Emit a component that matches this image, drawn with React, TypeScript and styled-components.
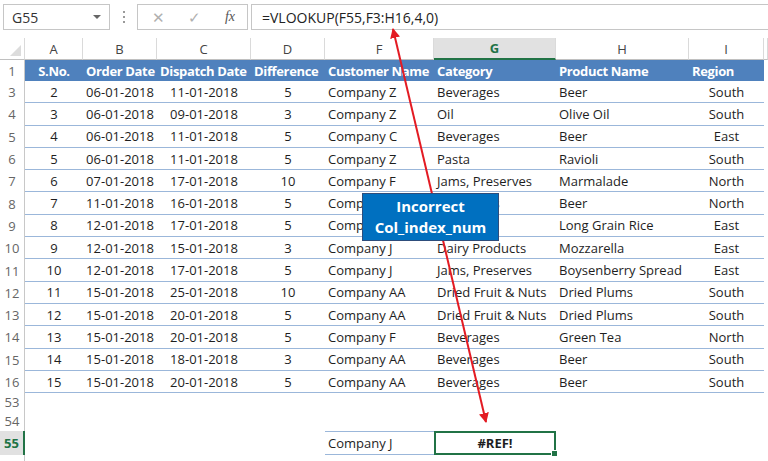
import React from 'react';
import styled, { createGlobalStyle } from 'styled-components';

const GlobalStyle = createGlobalStyle`
  html, body {
    margin: 0;
    padding: 0;
    background: #ffffff;
  }
  body {
    font-family: 'Open Sans', 'Liberation Sans', sans-serif;
  }
`;

const COLS = '25px 58px 74px 94px 74px 109px 122px 133px 75px 1fr';
const GREEN = '#217346';
const TABLE_LINE = '#9bb7da';

const Window = styled.div`
  position: relative;
  width: 768px;
  height: 461px;
  overflow: hidden;
  background: #fff;
`;

const Toolbar = styled.div`
  height: 38px;
  display: flex;
  align-items: flex-start;
  padding-top: 4px;
  box-sizing: border-box;
`;

const NameBox = styled.div`
  width: 107px;
  height: 26px;
  margin-left: 3px;
  box-sizing: border-box;
  border: 1px solid #c6c6c6;
  display: flex;
  align-items: center;
  justify-content: space-between;
  padding: 0 8px;
  font-size: 14px;
  color: #333;
`;

const Caret = styled.span`
  width: 0;
  height: 0;
  border-left: 4px solid transparent;
  border-right: 4px solid transparent;
  border-top: 4px solid #666;
`;

const Dots = styled.div`
  width: 27px;
  display: flex;
  flex-direction: column;
  align-items: center;
  justify-content: center;
  gap: 3px;
  height: 26px;

  span {
    width: 2px;
    height: 2px;
    background: #9a9a9a;
  }
`;

const FuncBox = styled.div`
  width: 111px;
  height: 26px;
  box-sizing: border-box;
  border: 1px solid #c6c6c6;
  display: flex;
  align-items: center;
  justify-content: space-between;
  padding: 0 12px 0 14px;
  color: #b0b0b0;
  font-size: 15px;
`;

const Fx = styled.span`
  font-family: 'Liberation Serif', serif;
  font-style: italic;
  color: #555;
  font-size: 14px;
`;

const FormulaBar = styled.div`
  flex: 1;
  height: 26px;
  margin-left: 3px;
  box-sizing: border-box;
  border: 1px solid #c6c6c6;
  border-right: none;
  display: flex;
  align-items: center;
  padding-left: 10px;
  font-size: 14px;
  color: #222;
`;

const Row = styled.div<{ $h: number }>`
  display: grid;
  grid-template-columns: ${COLS};
  height: ${p => p.$h}px;
`;

const ColHead = styled.div<{ $active?: boolean }>`
  display: flex;
  align-items: center;
  justify-content: center;
  font-size: 13px;
  color: ${p => (p.$active ? GREEN : '#444')};
  font-weight: ${p => (p.$active ? 700 : 400)};
  background: ${p => (p.$active ? '#e1e1e1' : '#fff')};
  border-right: 1px solid #dadada;
  border-bottom: ${p => (p.$active ? `2px solid ${GREEN}` : '1px solid #c0c0c0')};
  box-sizing: border-box;
`;

const Corner = styled.div`
  position: relative;
  border-right: 1px solid #dadada;
  border-bottom: 1px solid #c0c0c0;
  box-sizing: border-box;

  &::after {
    content: '';
    position: absolute;
    right: 3px;
    bottom: 3px;
    border-left: 11px solid transparent;
    border-bottom: 11px solid #dcdcdc;
  }
`;

const RowHead = styled.div<{ $active?: boolean }>`
  display: flex;
  align-items: center;
  justify-content: center;
  font-size: 13px;
  color: ${p => (p.$active ? GREEN : '#666')};
  font-weight: ${p => (p.$active ? 700 : 400)};
  background: ${p => (p.$active ? '#e1e1e1' : '#fff')};
  border-right: ${p => (p.$active ? `2px solid ${GREEN}` : '1px solid #c8c8c8')};
  box-sizing: border-box;
`;

const Cell = styled.div<{ $align?: 'left' | 'center'; $line?: boolean; $head?: boolean }>`
  display: flex;
  align-items: center;
  justify-content: ${p => (p.$align === 'center' ? 'center' : 'flex-start')};
  padding-left: ${p => (p.$align === 'center' ? 0 : 3)}px;
  font-size: 13px;
  white-space: nowrap;
  color: ${p => (p.$head ? '#fff' : '#1e1e1e')};
  font-weight: ${p => (p.$head ? 700 : 400)};
  letter-spacing: ${p => (p.$head ? '-0.35px' : '0')};
  background: ${p => (p.$head ? '#4f81bd' : 'transparent')};
  border-bottom: ${p => (p.$line ? `1px solid ${TABLE_LINE}` : 'none')};
  box-sizing: border-box;
`;

const Spacer = styled.div``;

const ResultCell = styled.div`
  display: flex;
  align-items: center;
  justify-content: center;
  font-size: 13px;
  font-weight: 700;
  color: #1e1e1e;
  border: 2px solid ${GREEN};
  box-sizing: border-box;
  position: relative;

  &::after {
    content: '';
    position: absolute;
    right: -4px;
    bottom: -4px;
    width: 5px;
    height: 5px;
    background: ${GREEN};
    border: 1px solid #fff;
  }
`;

const LookupCell = styled.div`
  display: flex;
  align-items: center;
  padding-left: 3px;
  font-size: 13px;
  color: #1e1e1e;
  border-top: 1px solid ${TABLE_LINE};
  border-bottom: 1px solid ${TABLE_LINE};
  box-sizing: border-box;
`;

const Callout = styled.div`
  position: absolute;
  left: 362px;
  top: 193px;
  width: 137px;
  height: 48px;
  box-sizing: border-box;
  background: #0070c0;
  border: 1px solid #2e4d7b;
  color: #fff;
  font-weight: 700;
  font-size: 15px;
  line-height: 21px;
  display: flex;
  flex-direction: column;
  align-items: center;
  justify-content: center;
  z-index: 2;
`;

const ArrowLayer = styled.svg`
  position: absolute;
  left: 0;
  top: 0;
  width: 768px;
  height: 461px;
  pointer-events: none;
  z-index: 1;
`;

type DataRow = [number, number, string, string, number, string, string, string, string];

const rows: DataRow[] = [
  [3, 2, '06-01-2018', '11-01-2018', 5, 'Company Z', 'Beverages', 'Beer', 'South'],
  [4, 3, '06-01-2018', '09-01-2018', 3, 'Company Z', 'Oil', 'Olive Oil', 'South'],
  [5, 4, '06-01-2018', '11-01-2018', 5, 'Company C', 'Beverages', 'Beer', 'East'],
  [6, 5, '06-01-2018', '11-01-2018', 5, 'Company Z', 'Pasta', 'Ravioli', 'South'],
  [7, 6, '07-01-2018', '17-01-2018', 10, 'Company F', 'Jams, Preserves', 'Marmalade', 'North'],
  [8, 7, '11-01-2018', '16-01-2018', 5, 'Company F', 'Beverages', 'Beer', 'North'],
  [9, 8, '12-01-2018', '17-01-2018', 5, 'Company J', 'Grains', 'Long Grain Rice', 'East'],
  [10, 9, '12-01-2018', '15-01-2018', 3, 'Company J', 'Dairy Products', 'Mozzarella', 'East'],
  [11, 10, '12-01-2018', '17-01-2018', 5, 'Company J', 'Jams, Preserves', 'Boysenberry Spread', 'East'],
  [12, 11, '15-01-2018', '25-01-2018', 10, 'Company AA', 'Dried Fruit & Nuts', 'Dried Plums', 'South'],
  [13, 12, '15-01-2018', '20-01-2018', 5, 'Company AA', 'Dried Fruit & Nuts', 'Dried Plums', 'South'],
  [14, 13, '15-01-2018', '20-01-2018', 5, 'Company F', 'Beverages', 'Green Tea', 'North'],
  [15, 14, '15-01-2018', '18-01-2018', 3, 'Company AA', 'Beverages', 'Beer', 'South'],
  [16, 15, '15-01-2018', '20-01-2018', 5, 'Company AA', 'Beverages', 'Beer', 'South'],
];

const letters = ['A', 'B', 'C', 'D', 'F', 'G', 'H', 'I', ''];
const headers = ['S.No.', 'Order Date', 'Dispatch Date', 'Difference', 'Customer Name', 'Category', 'Product Name', 'Region'];

// data rows are ~22.3px tall in the screenshot
const DATA_H = 22.3;

export default function App() {
  return (
    <Window>
      <GlobalStyle />
      <Toolbar>
        <NameBox>
          G55
          <Caret />
        </NameBox>
        <Dots>
          <span />
          <span />
          <span />
        </Dots>
        <FuncBox>
          <span>✕</span>
          <span>✓</span>
          <Fx>fx</Fx>
        </FuncBox>
        <FormulaBar>=VLOOKUP(F55,F3:H16,4,0)</FormulaBar>
      </Toolbar>

      <Row $h={22}>
        <Corner />
        {letters.map((l, i) => (
          <ColHead key={i} $active={l === 'G'}>
            {l}
          </ColHead>
        ))}
      </Row>

      <Row $h={21}>
        <RowHead>1</RowHead>
        {headers.map((h, i) => (
          <Cell key={h} $head $align={i === 0 ? 'center' : 'left'}>
            {h}
          </Cell>
        ))}
        <Cell />
      </Row>

      {rows.map(r => (
        <Row key={r[0]} $h={DATA_H}>
          <RowHead>{r[0]}</RowHead>
          <Cell $line $align="center">{r[1]}</Cell>
          <Cell $line $align="center">{r[2]}</Cell>
          <Cell $line $align="center">{r[3]}</Cell>
          <Cell $line $align="center">{r[4]}</Cell>
          <Cell $line>{r[5]}</Cell>
          <Cell $line>{r[6]}</Cell>
          <Cell $line>{r[7]}</Cell>
          <Cell $line $align="center">{r[8]}</Cell>
          <Cell />
        </Row>
      ))}

      <Row $h={18}>
        <RowHead>53</RowHead>
      </Row>
      <Row $h={20}>
        <RowHead>54</RowHead>
      </Row>
      <Row $h={24}>
        <RowHead $active>55</RowHead>
        <Spacer />
        <Spacer />
        <Spacer />
        <Spacer />
        <LookupCell>Company J</LookupCell>
        <ResultCell>#REF!</ResultCell>
      </Row>
      <Row $h={10}>
        <RowHead />
      </Row>

      <Callout>
        <span>Incorrect</span>
        <span>Col_index_num</span>
      </Callout>

      <ArrowLayer viewBox="0 0 768 461">
        <defs>
          <marker id="head" viewBox="0 0 10 10" refX="9" refY="5" markerWidth="5" markerHeight="5" orient="auto-start-reverse">
            <path d="M0 0 L10 5 L0 10 z" fill="#e31b23" />
          </marker>
        </defs>
        <line x1="393" y1="29" x2="486" y2="422" stroke="#e31b23" strokeWidth="2" markerStart="url(#head)" markerEnd="url(#head)" />
      </ArrowLayer>
    </Window>
  );
}
